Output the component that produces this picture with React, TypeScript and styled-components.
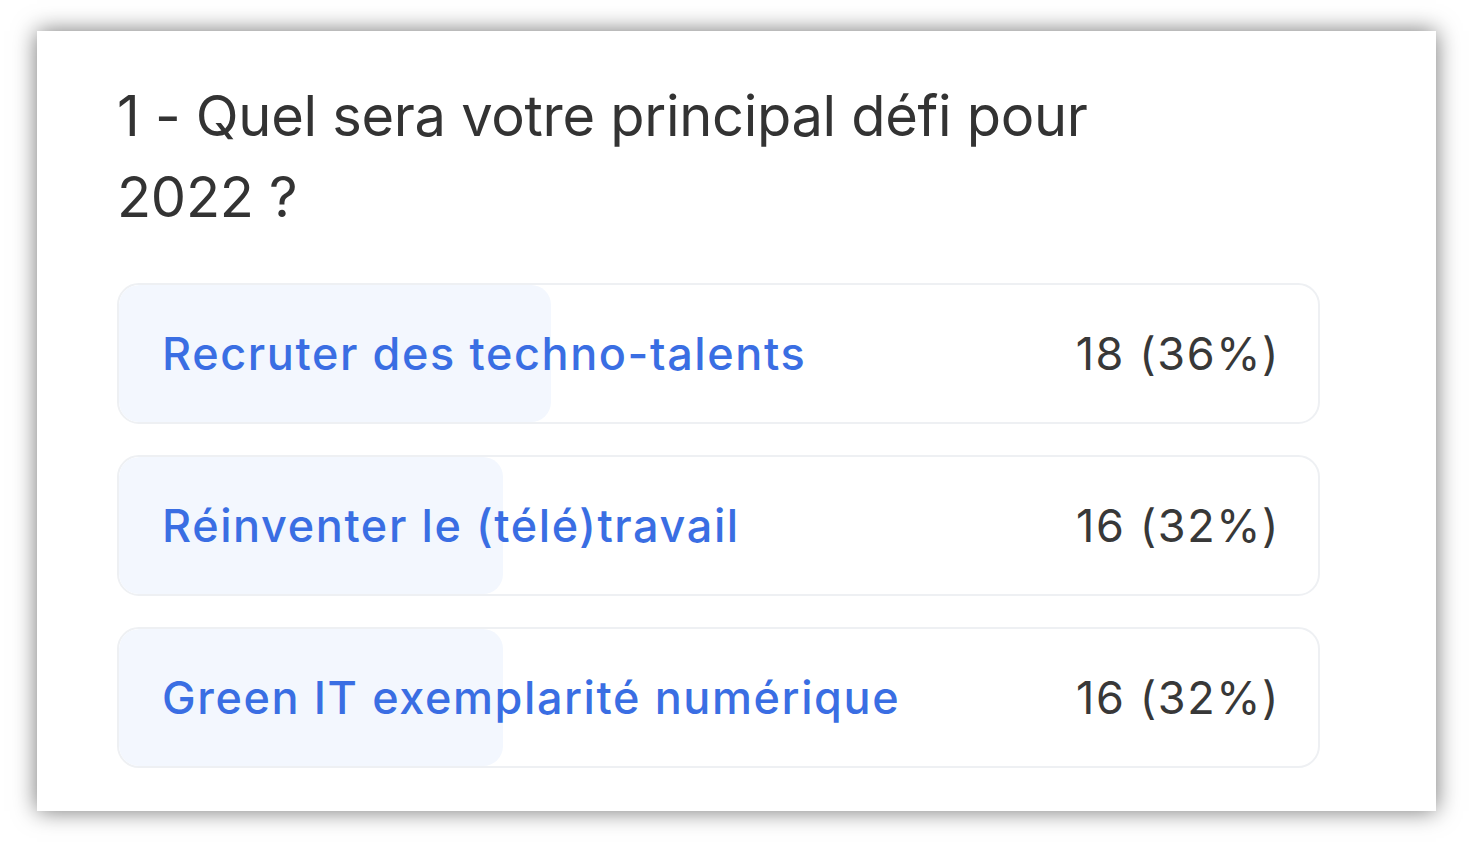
import styled, { createGlobalStyle } from "styled-components";

const GlobalStyle = createGlobalStyle`
  html, body {
    margin: 0;
    padding: 0;
    background: #ffffff;
  }
  * {
    box-sizing: border-box;
  }
`;

const Page = styled.div`
  width: 1473px;
  height: 842px;
  padding: 31px 37px;
`;

const Card = styled.section`
  width: 1399px;
  height: 780px;
  background: #ffffff;
  box-shadow: 0 0 22px rgba(0, 0, 0, 0.55);
  padding: 45px 116px 0 80px;
  font-family: Inter, "Noto Sans", sans-serif;
`;

const Question = styled.h2`
  margin: 0 0 45px;
  max-width: 1000px;
  font-size: 56px;
  line-height: 81px;
  font-weight: 400;
  letter-spacing: -0.3px;
  color: #333333;
`;

const Options = styled.div`
  display: flex;
  flex-direction: column;
  gap: 31px;
`;

const Option = styled.div`
  position: relative;
  height: 141px;
  border: 2px solid #eef0f3;
  border-radius: 22px;
  overflow: hidden;
`;

const Fill = styled.div`
  position: absolute;
  top: 0;
  left: 0;
  bottom: 0;
  background: #f3f7fe;
  border-radius: 20px;
`;

const OptionBody = styled.div`
  position: relative;
  height: 100%;
  display: flex;
  align-items: center;
  justify-content: space-between;
  padding: 0 38px 0 43px;
  font-size: 45px;
`;

const Label = styled.span`
  color: #3a6ee3;
  font-weight: 500;
  letter-spacing: 1.6px;
`;

const Count = styled.span`
  color: #383838;
  font-weight: 400;
  letter-spacing: 1.6px;
`;

const results = [
  { label: "Recruter des techno-talents", votes: 18, pct: 36 },
  { label: "Réinventer le (télé)travail", votes: 16, pct: 32 },
  { label: "Green IT exemplarité numérique", votes: 16, pct: 32 },
];

const App = () => {
  return (
    <>
      <GlobalStyle />
      <Page>
        <Card>
          <Question>1 - Quel sera votre principal défi pour 2022 ?</Question>
          <Options>
            {results.map((r) => (
              <Option key={r.label}>
                <Fill style={{ width: `${r.pct}%` }} />
                <OptionBody>
                  <Label>{r.label}</Label>
                  <Count>
                    {r.votes} ({r.pct}%)
                  </Count>
                </OptionBody>
              </Option>
            ))}
          </Options>
        </Card>
      </Page>
    </>
  );
};

export default App;
